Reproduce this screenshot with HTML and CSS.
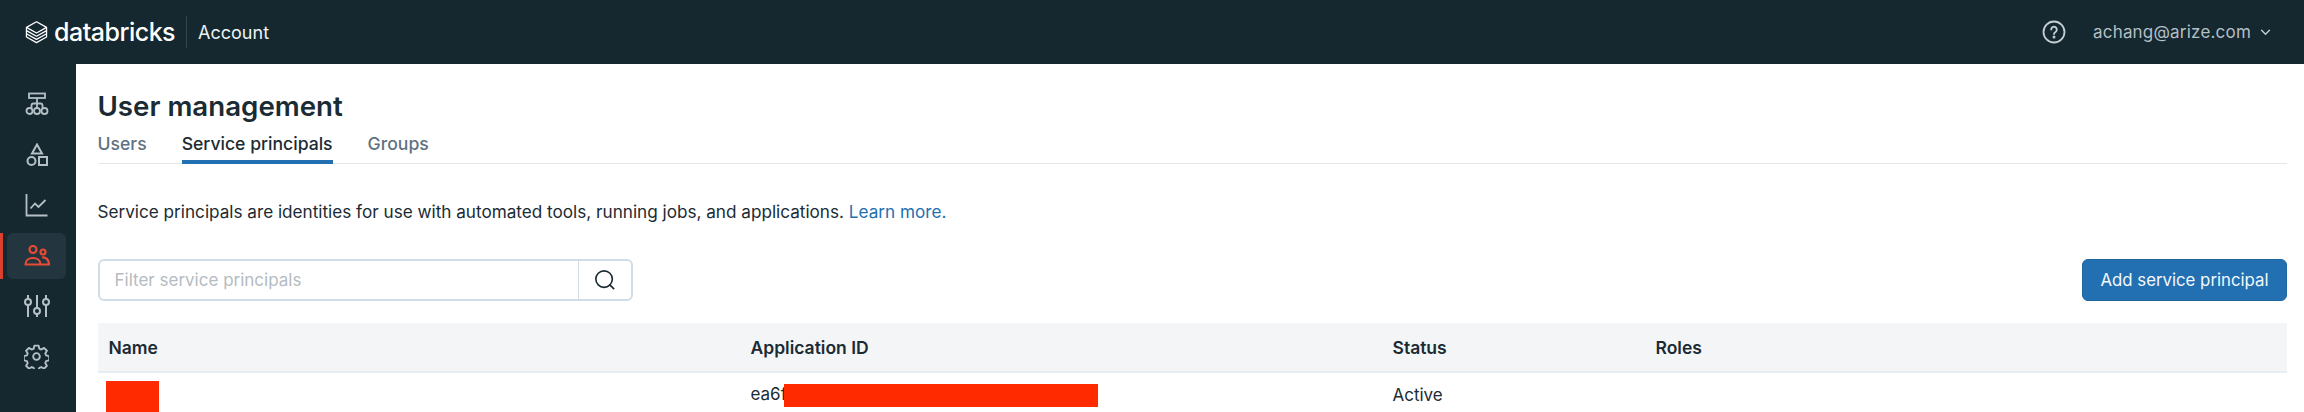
FILE: index.html
```html
<!DOCTYPE html>
<html lang="en">
<head>
<meta charset="utf-8">
<title>User management</title>
<link rel="stylesheet" href="styles.css">
</head>
<body>
<header class="topbar">
  <div class="brand">
    <svg class="logo" viewBox="0 0 24 26" width="23" height="24" fill="none" stroke="#fff" stroke-width="1.300" stroke-linejoin="round" preserveAspectRatio="none"><path d="M12 2 22.500 8 12 14 1.500 8z"/><path d="M1.500 8v3.500L12 17.500l10.500-6V8"/><path d="M1.500 11.500V15L12 21l10.500-6v-3.500"/><path d="M1.500 15v3.500L12 24.500l10.500-6V15"/></svg>
    <span class="wordmark">databricks</span>
    <span class="brand-divider"></span>
    <span class="product">Account</span>
  </div>
  <div class="top-right">
    <svg class="help" viewBox="0 0 24 24" width="24" height="24" fill="none" stroke="#c4ced3" stroke-width="1.800"><circle cx="12" cy="12" r="10.500"/><path d="M9.200 9.500a2.800 2.800 0 1 1 4.300 2.400c-1 .6-1.500 1.100-1.500 2.200" stroke-linecap="round"/><circle cx="12" cy="17" r=".6" fill="#c4ced3"/></svg>
    <span class="user">achang@arize.com</span>
    <svg class="chev" viewBox="0 0 12 8" width="11" height="7" fill="none" stroke="#c4ced3" stroke-width="1.600" stroke-linecap="round" stroke-linejoin="round"><path d="M1.500 1.500 6 6l4.500-4.500"/></svg>
  </div>
</header>
<div class="shell">
  <nav class="sidebar">
    <a class="nav-item"><svg viewBox="0 0 24 24" width="24" height="24" fill="none" stroke="#b4c0c5" stroke-width="1.800"><rect x="4" y="1.500" width="16" height="4.500"/><path d="M12 6v6M6.500 16v-2.500a2 2 0 0 1 2-2h7a2 2 0 0 1 2 2V16M12 12v4"/><circle cx="4.500" cy="19" r="3"/><circle cx="12" cy="19" r="3"/><circle cx="19.500" cy="19" r="3"/></svg></a>
    <a class="nav-item"><svg viewBox="0 0 24 24" width="24" height="24" fill="none" stroke="#b4c0c5" stroke-width="2"><path d="M12 1.500 17 10.500H7z"/><circle cx="6.500" cy="18" r="4"/><rect x="14" y="14" width="8" height="8"/></svg></a>
    <a class="nav-item"><svg viewBox="0 0 24 24" width="24" height="24" fill="none" stroke="#b4c0c5" stroke-width="1.800"><path d="M1.500 1v21.500h21"/><path d="M5.500 15.500 10 10.500l3.500 3.500 7-7"/></svg></a>
    <a class="nav-item active"><svg viewBox="0 0 26 24" width="26" height="24" fill="none" stroke="#ea4a35" stroke-width="2.200"><circle cx="9" cy="5.500" r="3.500"/><circle cx="19" cy="8" r="2.500"/><path d="M1.500 20.500c0-4 3-6.500 7.500-6.500s7.500 2.500 7.500 6.500zM18 13.500c4-.5 7 2.500 7 7h-8.500" stroke-linejoin="round"/></svg></a>
    <a class="nav-item"><svg viewBox="0 0 26 24" width="26" height="24" fill="none" stroke="#b4c0c5" stroke-width="2"><path d="M4 23V11M4 5V1M13 23v-3M13 14V1M22 23V11M22 5V1"/><circle cx="4" cy="8" r="3"/><circle cx="13" cy="17" r="3"/><circle cx="22" cy="8" r="3"/></svg></a>
    <a class="nav-item"><svg viewBox="0 0 24 24" width="25" height="25" fill="none" stroke="#b4c0c5" stroke-width="1.800" stroke-linejoin="round"><circle cx="12" cy="12" r="3.200"/><path d="M10 1.500h4l.7 3 1.900.8 2.600-1.600 2.800 2.800-1.600 2.600.8 1.900 3 .7v4l-3 .7-.8 1.900 1.600 2.600-2.800 2.800-2.600-1.600-1.900.8-.7 3h-4l-.7-3-1.900-.8-2.600 1.600-2.800-2.800 1.600-2.600-.8-1.900-3-.7v-4l3-.7.8-1.900-1.600-2.600 2.800-2.800 2.600 1.600 1.900-.8z"/></svg></a>
  </nav>
  <main class="content">
    <h1 class="title">User management</h1>
    <div class="tabs">
      <a class="tab">Users</a>
      <a class="tab current">Service principals</a>
      <a class="tab">Groups</a>
    </div>
    <p class="intro">Service principals are identities for use with automated tools, running jobs, and applications. <a class="link">Learn more.</a></p>
    <div class="toolbar">
      <div class="search">
        <input class="search-input" type="text" placeholder="Filter service principals">
        <button class="search-btn" type="button"><svg viewBox="0 0 24 24" width="22" height="22" fill="none" stroke="#1b2b33" stroke-width="1.800"><circle cx="11" cy="11" r="9"/><path d="m17 17 5 5"/></svg></button>
      </div>
      <button class="primary" type="button">Add service principal</button>
    </div>
    <div class="table">
      <div class="row head">
        <div>Name</div><div>Application ID</div><div>Status</div><div>Roles</div>
      </div>
      <div class="row body">
        <div><span class="redact name-redact"></span></div>
        <div class="app-id">ea6f<span class="redact id-redact"></span></div>
        <div>Active</div>
        <div></div>
      </div>
    </div>
  </main>
</div>
</body>
</html>
```
FILE: styles.css
```css
* { box-sizing: border-box; }
html, body { margin: 0; height: 412px; overflow: hidden; }
body { font-family: Inter, "Liberation Sans", sans-serif; color: #1b2b33; background: #fff; }

.topbar { height: 64px; background: #152830; display: flex; align-items: center; justify-content: space-between; padding: 0 33px 0 25px; }
.brand { display: flex; align-items: center; color: #fff; }
.logo { display: block; }
.wordmark { font-family: Inter, sans-serif; font-size: 25px; font-weight: 500; margin-left: 6px; letter-spacing: -0.5px; }
.brand-divider { width: 1px; height: 32px; background: #33474f; margin: 0 11px 0 11px; }
.product { font-size: 18px; color: #eef2f3; }
.top-right { display: flex; align-items: center; color: #a9b6bc; }
.help { margin-right: 27px; }
.user { font-size: 17px; color: #b3bfc4; letter-spacing: .2px; }
.chev { margin-left: 9px; }

.shell { display: flex; height: 348px; }
.sidebar { width: 76px; flex: none; background: #152830; padding-top: 17px; display: flex; flex-direction: column; align-items: stretch; }
.nav-item { height: 46px; margin: 0 10px 4.500px 7px; display: flex; align-items: center; justify-content: center; border-radius: 6px; position: relative; }
.nav-item svg { display: block; }
.nav-item.active { background: #23363f; }
.nav-item.active::before { content: ""; position: absolute; left: -7px; top: 0; bottom: 0; width: 3px; background: #d9402e; }

.content { flex: 1; padding: 0 17px 0 21.500px; min-width: 0; }
.title { margin: 24px 0 0; font-size: 27.700px; line-height: 36px; font-weight: 600; color: #1b2b33; }
.tabs { display: flex; gap: 35px; margin-top: 5px; border-bottom: 1px solid #e3e8eb; height: 35px; }
.tab { font-size: 17.600px; line-height: 30px; font-weight: 500; color: #5f7281; height: 35px; }
.tab.current { color: #1b2b33; border-bottom: 4px solid #2270b1; }
.intro { margin: 36px 0 0; font-size: 17.150px; line-height: 24px; color: #1b2b33; }
.link { color: #2270b1; }
.toolbar { display: flex; justify-content: space-between; margin-top: 35px; height: 42px; }
.search { width: 535px; display: flex; border: 2px solid #cfdde6; border-radius: 6px; }
.search-input { flex: 1; min-width: 0; border: 0; outline: 0; padding: 0 15px; font: 17px Inter, sans-serif; background: transparent; }
.search-input::placeholder { color: #b4bcc1; opacity: 1; }
.search-btn { width: 53px; border: 0; border-left: 1px solid #cfdde6; background: transparent; padding: 0; display: flex; align-items: center; justify-content: center; }
.primary { width: 205px; border: 1px solid #1f679f; border-radius: 6px; background: #2270b1; color: #f3f8fb; font: 16.800px Inter, sans-serif; padding: 0; }

.table { margin-top: 22px; }
.row { display: grid; grid-template-columns: 642px 642px 263px 1fr; font-size: 17.500px; }
.row > div { padding-left: 11px; }
.head { height: 50px; align-items: center; background: #f3f5f6; border-bottom: 2px solid #e7edf0; font-weight: 600; }
.body { height: 42px; align-items: center; font-size: 17px; }
.redact { display: inline-block; background: #ff2a00; vertical-align: middle; }
.name-redact { width: 53px; height: 36px; margin: 8px 0 0 -3px; display: block; }
.id-redact { width: 314px; height: 23px; margin-left: -3px; }
```
